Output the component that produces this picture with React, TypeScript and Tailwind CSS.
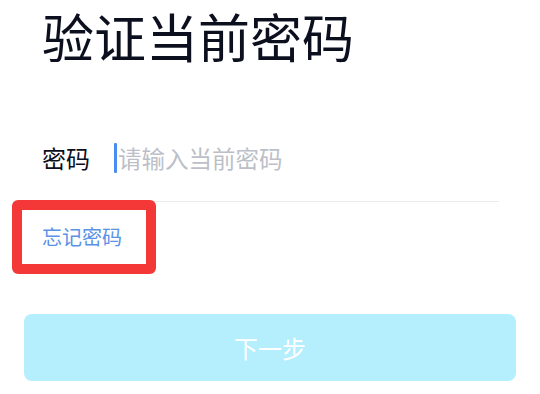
import React from "react";

export default function App() {
  return (
    <div
      className="w-[540px] h-[394px] bg-white overflow-hidden relative"
      style={{ fontFamily: '"Noto Sans CJK SC", "Noto Sans", sans-serif' }}
    >
      <div className="pl-[42px] pt-[4px]">
        <h1 className="text-[52px] leading-[64px] text-[#0b0f1e] font-normal whitespace-nowrap">
          验证当前密码
        </h1>
      </div>
      <div className="mt-[70px] ml-[20px] mr-[41px] border-b border-[#ebebeb] h-[64px] flex items-start pl-[22px]">
        <span className="text-[24px] leading-[34px] text-[#0b0f1e] mt-[3px]">密码</span>
        <div className="ml-[24px] mt-[3px] flex items-center">
          <span className="w-[3px] h-[30px] bg-[#4a8cf0] rounded-[1px] mr-[1px]" />
          <span className="text-[23.5px] leading-[34px] text-[#bcbfc8]">请输入当前密码</span>
        </div>
      </div>
      <div className="-mt-[2px] ml-[12px] w-[144px] h-[74px] border-[10px] border-[#f43838] rounded-[6px] flex items-center pl-[20px]">
        <span className="text-[20px] leading-[26px] text-[#5a92e6]">忘记密码</span>
      </div>
      <div className="mt-[40px] mx-[24px] h-[67px] rounded-[8px] bg-[#b5eefd] flex items-center justify-center">
        <span className="text-[24px] text-white">下一步</span>
      </div>
    </div>
  );
}
